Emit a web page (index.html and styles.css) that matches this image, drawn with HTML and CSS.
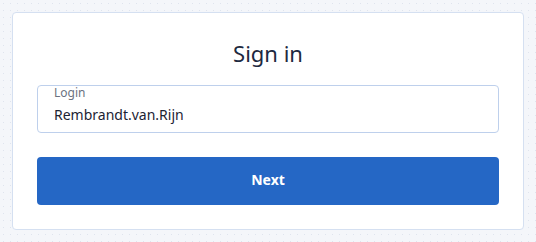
FILE: index.html
```html
<!DOCTYPE html>
<html lang="en">
<head>
<meta charset="utf-8">
<title>Sign in</title>
<link rel="stylesheet" href="styles.css">
</head>
<body>
  <main class="page">
    <form class="card">
      <h1 class="title">Sign in</h1>
      <label class="field">
        <span class="field-label">Login</span>
        <span class="field-value">Rembrandt.van.Rijn</span>
      </label>
      <button class="btn" type="button">Next</button>
    </form>
  </main>
</body>
</html>
```
FILE: styles.css
```css
html, body {
  margin: 0;
  padding: 0;
}
body {
  width: 536px;
  height: 242px;
  background-color: #f4f6fa;
  background-image: radial-gradient(circle, #dfe4ee 0.6px, transparent 0.9px);
  background-size: 7px 7px;
  font-family: "Noto Sans", "Open Sans", sans-serif;
  overflow: hidden;
}
.page {
  padding: 12px;
}
.card {
  box-sizing: border-box;
  width: 512px;
  background: #ffffff;
  border: 1px solid #d5e0f1;
  border-radius: 4px;
  padding: 25px 24px 24px;
  display: flex;
  flex-direction: column;
}
.title {
  margin: 0 0 17px;
  text-align: center;
  font-size: 22px;
  line-height: 30px;
  font-weight: 400;
  color: #1e2940;
}
.field {
  box-sizing: border-box;
  height: 48px;
  border: 1px solid #bed0ec;
  border-radius: 4px;
  padding: 0 16px;
  display: flex;
  flex-direction: column;
}
.field-label {
  font-size: 12px;
  line-height: 14px;
  color: #6b7280;
}
.field-value {
  margin-top: 5px;
  font-size: 14px;
  line-height: 20px;
  color: #1c2333;
}
.btn {
  margin-top: 24px;
  height: 48px;
  border: none;
  border-radius: 4px;
  background: #2567c5;
  color: #ffffff;
  font-family: inherit;
  font-size: 14px;
  font-weight: 700;
  padding: 0 0 3px;
}
```
